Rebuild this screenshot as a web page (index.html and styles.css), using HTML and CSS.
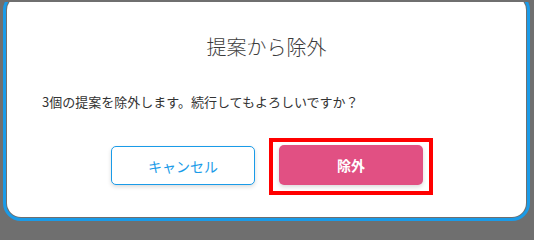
FILE: index.html
```html
<!DOCTYPE html>
<html lang="ja">
<head>
<meta charset="utf-8">
<title>提案から除外</title>
<link rel="stylesheet" href="styles.css">
</head>
<body>
<div class="clip">
  <div class="frame">
    <div class="modal">
      <h2 class="title">提案から除外</h2>
      <p class="message">3個の提案を除外します。続行してもよろしいですか？</p>
      <div class="actions">
        <button class="btn btn-cancel" type="button">キャンセル</button>
        <span class="highlight"><button class="btn btn-remove" type="button">除外</button></span>
      </div>
    </div>
  </div>
</div>
</body>
</html>
```

FILE: styles.css
```css
html {
  margin: 0;
  padding: 0;
  height: 224px;
  background: #6f6f6f;
}
body {
  margin: 0;
  width: 534px;
  height: 224px;
  background: #6f6f6f;
  padding-top: 2px;
  box-sizing: border-box;
  font-family: "Noto Sans CJK JP", "Noto Sans", sans-serif;
}
.clip {
  height: 222px;
  overflow: hidden;
}
.frame {
  margin: -10px 0 0 3px;
  width: 527px;
  height: 229px;
  box-sizing: border-box;
  border: 3px solid #1a9be8;
  border-radius: 18px;
  padding: 1px;
  background: #6f6f6f;
}
.modal {
  height: 100%;
  background: #ffffff;
  border-radius: 14px;
  padding-top: 37px;
  box-sizing: border-box;
}
.title {
  margin: 0;
  text-align: center;
  font-size: 20px;
  line-height: 28px;
  font-weight: 300;
  color: #3c3c3c;
}
.message {
  margin: 31px 0 0 35px;
  font-size: 13px;
  line-height: 20px;
  font-weight: 400;
  color: #333333;
}
.actions {
  display: flex;
  justify-content: center;
  gap: 24px;
  margin-top: 33px;
  padding-left: 1px;
}
.btn {
  display: block;
  width: 144px;
  height: 40px;
  border-radius: 5px;
  font-family: "Noto Sans CJK JP", "Noto Sans", sans-serif;
  font-size: 14px;
  cursor: pointer;
  box-sizing: border-box;
  box-shadow: 0 2px 4px rgba(0, 0, 0, 0.14);
}
.btn-cancel {
  background: #ffffff;
  border: 1px solid #1a9be8;
  color: #1a9be8;
  margin-top: 1px;
  height: 39px;
}
.btn-remove {
  background: #e15083;
  border: none;
  color: #ffffff;
  font-weight: 700;
}
.highlight {
  position: relative;
  display: block;
}
.highlight::after {
  content: "";
  position: absolute;
  top: -7px;
  left: -10px;
  right: -10px;
  bottom: -10px;
  border: 4px solid #ff0000;
  pointer-events: none;
}
```
